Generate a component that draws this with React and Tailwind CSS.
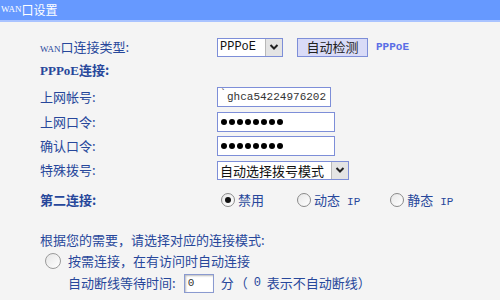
import React from 'react';

const cjk = { fontFamily: '"Noto Sans CJK SC", sans-serif' };
const mono = { fontFamily: '"Liberation Mono", "Noto Sans CJK SC", monospace' };
const serif = { fontFamily: '"Liberation Serif", serif' };

function Chevron() {
  return (
    <svg width="10" height="8" viewBox="0 0 10 8">
      <path d="M1.5 2 L5 5.5 L8.5 2" fill="none" stroke="#222" strokeWidth="2" />
    </svg>
  );
}

function Select({ children, width, textStyle }) {
  return (
    <div className={`flex h-[19px] border border-[#7d8ed8] bg-white ${width}`}>
      <div className="flex-1 flex items-center pl-[2px] text-[12px] text-[#111] leading-none" style={textStyle}>
        {children}
      </div>
      <div className="w-[17px] flex items-center justify-center bg-[#e4e4e4] border-l border-[#b8b8b8]">
        <Chevron />
      </div>
    </div>
  );
}

function Radio({ checked }) {
  return (
    <div className="w-[14px] h-[14px] rounded-full border border-[#8a8a8a] bg-gradient-to-br from-[#e8e8e8] to-white flex items-center justify-center">
      {checked && <div className="w-[6px] h-[6px] rounded-full bg-[#111]" />}
    </div>
  );
}

function Password() {
  return (
    <div className="h-[20px] w-[118px] border border-[#7d8ed8] bg-white flex items-center gap-[2px] pl-[3px]">
      {[0, 1, 2, 3, 4, 5, 6, 7].map((i) => (
        <div key={i} className="w-[6px] h-[6px] rounded-full bg-black" />
      ))}
    </div>
  );
}

function Row({ label, bold, mt, children }) {
  return (
    <div className={`flex items-center h-[20px] ${mt}`}>
      <div className={`w-[177px] text-[13px] text-[#27479b] ${bold ? 'font-bold' : ''}`} style={cjk}>
        {label}
      </div>
      {children}
    </div>
  );
}

export default function App() {
  return (
    <div className="w-[500px] h-[300px] bg-[#f4f4f4] overflow-hidden" style={cjk}>
      {/* header */}
      <div className="h-[20px] bg-[#6699ff] flex items-center pl-[1px] text-white text-[12px]">
        <span className="text-[9px]" style={serif}>WAN</span>
        <span>口设置</span>
      </div>
      <div className="h-[2px] bg-[#a9c3ff]" />

      <div className="pl-[40px] pt-[15px]">
        <Row label={<><span className="text-[9px]" style={serif}>WAN</span>口连接类型:</>}>
          <Select width="w-[66px]" textStyle={mono}>PPPoE</Select>
          <div className="ml-[14px] h-[19px] w-[71px] border border-[#7d8ed8] bg-[#d9dbf7] flex items-center justify-center text-[13px] text-[#222]">
            自动检测
          </div>
          <span className="ml-[8px] text-[11px] font-bold text-[#5a6ee6]" style={mono}>PPPoE</span>
        </Row>

        <Row label={<><span style={serif}>PPPoE</span>连接:</>} bold mt="mt-[3px]" />

        <Row label="上网帐号:" mt="mt-[7px]">
          <div className="h-[20px] w-[114px] border border-[#7d8ed8] bg-white flex items-center pl-[2px] text-[11px] text-[#333]" style={mono}>
            <span className="text-[10px] -mt-[5px] mr-[1px]">`</span>ghca54224976202
          </div>
        </Row>

        <Row label="上网口令:" mt="mt-[5px]">
          <Password />
        </Row>

        <Row label="确认口令:" mt="mt-[4px]">
          <Password />
        </Row>

        <Row label="特殊拨号:" mt="mt-[4px]">
          <Select width="w-[132px]" textStyle={cjk}>
            <span className="text-[13px]">自动选择拨号模式</span>
          </Select>
        </Row>

        <Row label="第二连接:" bold mt="mt-[10px]">
          <div className="flex items-center text-[13px] text-[#27479b] pl-[4px]">
            <Radio checked />
            <span className="ml-[3px]">禁用</span>
            <div className="ml-[33px]"><Radio /></div>
            <span className="ml-[3px]">动态<span className="text-[11px] ml-[7px]" style={mono}>IP</span></span>
            <div className="ml-[30px]"><Radio /></div>
            <span className="ml-[3px]">静态<span className="text-[11px] ml-[7px]" style={mono}>IP</span></span>
          </div>
        </Row>

        <div className="mt-[20px] h-[20px] flex items-center text-[13px] text-[#27479b]">
          根据您的需要，请选择对应的连接模式:
        </div>

        <div className="mt-[1px] h-[20px] flex items-center text-[13px] text-[#27479b] pl-[5px]">
          <div className="w-[16px] h-[16px] rounded-full border border-[#9a9a9a] bg-gradient-to-br from-[#e6e6e6] to-white" />
          <span className="ml-[7px]">按需连接，在有访问时自动连接</span>
        </div>

        <div className="mt-[2px] h-[20px] flex items-center text-[13px] text-[#27479b] pl-[28px]">
          <span>自动断线等待时间:</span>
          <div className="ml-[8px] h-[19px] w-[30px] border border-[#8a9ad0] bg-white shadow-[inset_1px_1px_2px_#bbb] flex items-center pl-[3px] text-[11px] text-[#333]" style={mono}>
            0
          </div>
          <span className="ml-[7px]">分</span>
          <span className="ml-[1px]">（</span>
          <span className="ml-[6px] text-[12px]" style={mono}>0</span>
          <span className="ml-[6px]">表示不自动断线）</span>
        </div>
      </div>
    </div>
  );
}
